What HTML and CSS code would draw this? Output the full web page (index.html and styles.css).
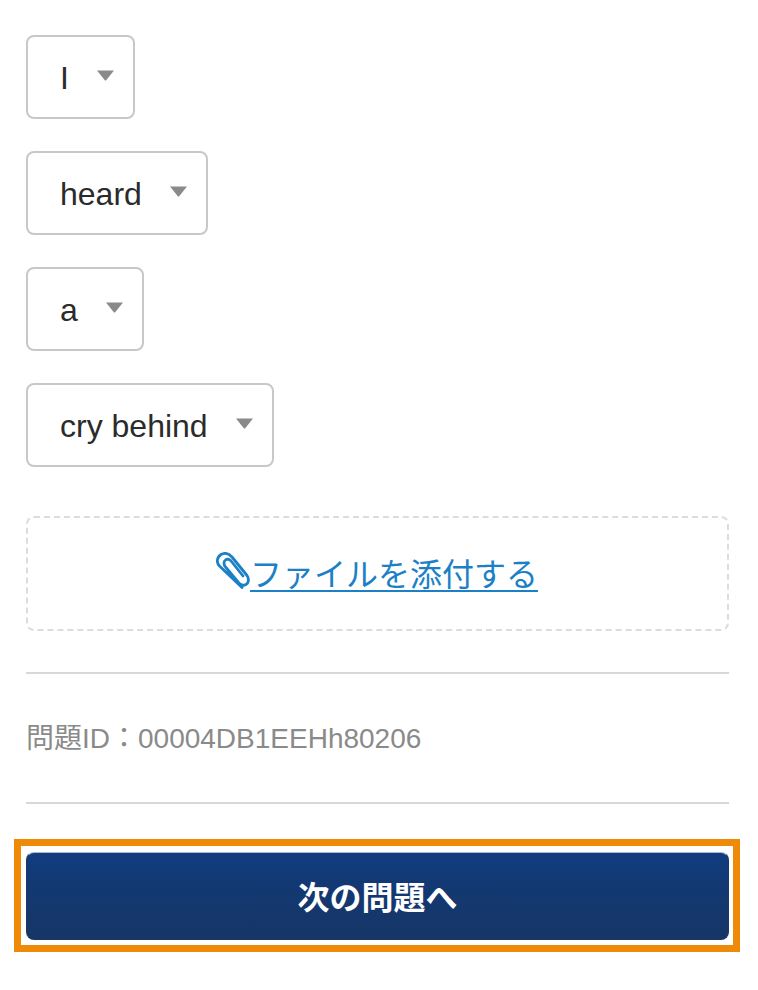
FILE: index.html
```html
<!DOCTYPE html>
<html lang="ja">
<head>
<meta charset="utf-8">
<title>問題</title>
<link rel="stylesheet" href="styles.css">
</head>
<body>
<main class="page">
  <div class="choices">
    <div class="pick"><span>I</span><svg class="caret" viewBox="0 0 19 11"><path d="M1 0.5H18L10 10.5H9Z"/></svg></div>
    <div class="pick"><span>heard</span><svg class="caret" viewBox="0 0 19 11"><path d="M1 0.5H18L10 10.5H9Z"/></svg></div>
    <div class="pick"><span>a</span><svg class="caret" viewBox="0 0 19 11"><path d="M1 0.5H18L10 10.5H9Z"/></svg></div>
    <div class="pick"><span>cry behind</span><svg class="caret" viewBox="0 0 19 11"><path d="M1 0.5H18L10 10.5H9Z"/></svg></div>
  </div>
  <div class="drop">
    <svg class="clip" viewBox="0 0 34 37"><path d="M26 35.5 L3.5 14 C0 10.5 1 5 5 2.5 C9 0.5 13 1.5 16 5 L31 23.5 C33.5 27 32.5 31 30 32.5 C27 34 24.5 33 22.5 30.5 L9.5 15 C7.5 12.5 7.5 9.5 9.5 8 C11.5 6.5 14 7.5 15.5 9.5 L27 24"/></svg><a class="attach" href="#">ファイルを添付する</a>
  </div>
  <div class="qid">問題ID：00004DB1EEHh80206</div>
  <div class="focus">
    <button class="next" type="button">次の問題へ</button>
  </div>
</main>
</body>
</html>
```
FILE: styles.css
```css
* { box-sizing: border-box; }
html, body { margin: 0; padding: 0; background: #fff; }
body {
  font-family: "Liberation Sans", "Noto Sans CJK JP", sans-serif;
  color: #2b2b2b;
}
.page { width: 758px; height: 990px; padding: 35px 29px 0 26px; overflow: hidden; }
.choices { display: flex; flex-direction: column; align-items: flex-start; gap: 32px; }
.pick {
  display: flex;
  align-items: center;
  height: 84px;
  padding: 0 18px 0 32px;
  border: 2px solid #c8c8c8;
  border-radius: 8px;
  font-size: 32px;
  background: #fff;
}
.pick span { margin-right: 27px; padding-top: 3px; }
.caret { width: 19px; height: 11px; margin-top: -3px; fill: #8a8a8a; flex: none; }
.drop {
  display: flex;
  align-items: center;
  justify-content: center;
  height: 115px;
  margin-top: 49px;
  border: 2px dashed #dcdcdc;
  border-radius: 8px;
  padding-bottom: 4px;
}
.clip {
  width: 34px;
  height: 37px;
  margin-top: -2px;
  margin-left: -1px;
  fill: none;
  stroke: #1c80c6;
  stroke-width: 2.8;
  stroke-linecap: round;
  stroke-linejoin: round;
  flex: none;
}
.attach {
  font-family: "Noto Sans CJK JP", sans-serif;
  font-size: 32px;
  line-height: 44px;
  color: #1c80c6;
  text-decoration: underline;
  text-decoration-thickness: 2px;
  text-underline-offset: 4px;
}
.qid {
  height: 132px;
  margin-top: 41px;
  padding-bottom: 4px;
  border-top: 2px solid #d8d8d8;
  border-bottom: 2px solid #d8d8d8;
  display: flex;
  align-items: center;
  font-size: 28px;
  color: #8a8a8a;
}
.focus {
  margin: 35px -11px 0 -12px;
  height: 113px;
  padding: 6px 4px 5px 5px;
  border: 7px solid #ee8a08;
}
.next {
  display: block;
  width: 100%;
  height: 88px;
  padding-bottom: 4px;
  border: 1px solid #1d3763;
  border-top-color: #a9b6cb;
  border-radius: 8px;
  background: linear-gradient(#113c80, #133872 40%, #163667);
  color: #fff;
  font-family: "Noto Sans CJK JP", sans-serif;
  font-size: 32px;
  font-weight: 700;
}
```
